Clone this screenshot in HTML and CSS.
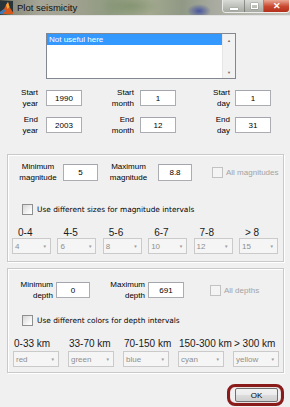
FILE: index.html
```html
<!DOCTYPE html>
<html lang="en">
<head>
    <meta charset="UTF-8">
    <meta name="viewport" content="width=device-width, initial-scale=1.0">
    <title>Plot seismicity</title>
    <link rel="stylesheet" href="styles.css">
</head>
<body>
    <div class="titlebar">
        <svg class="app-icon" width="13" height="13" viewBox="0 0 13 13">
            <rect width="13" height="13" fill="#27343a"/>
            <path d="M0 11 L4 8 L6 4 L8 1 L9.5 6 L13 11.5 L13 13 L0 13 Z" fill="#d8581a"/>
            <path d="M6 4 L8 1 L9.5 6 L7.5 8 Z" fill="#f3a739"/>
            <path d="M0 11 L4 8 L5.5 10 L2.5 13 L0 13 Z" fill="#3b7cc0"/>
        </svg>
        <span class="title">Plot seismicity</span>
        <div class="caption-buttons">
            <span class="cap-btn min"><span class="min-bar"></span></span>
            <span class="cap-btn max"><span class="max-box"></span></span>
            <span class="cap-btn close">✕</span>
        </div>
    </div>

    <div class="listbox">
        <div class="list-items">
            <div class="list-item selected">Not useful here</div>
        </div>
        <div class="list-scroll">
            <span class="scroll-arrow">▲</span>
            <span class="scroll-arrow">▼</span>
        </div>
    </div>

    <div class="dates">
        <div class="date-label">Start<br>year</div>
        <input class="edit" type="text" value="1990">
        <div class="date-label">Start<br>month</div>
        <input class="edit" type="text" value="1">
        <div class="date-label">Start<br>day</div>
        <input class="edit" type="text" value="1">

        <div class="date-label">End<br>year</div>
        <input class="edit" type="text" value="2003">
        <div class="date-label">End<br>month</div>
        <input class="edit" type="text" value="12">
        <div class="date-label">End<br>day</div>
        <input class="edit" type="text" value="31">
    </div>

    <!-- magnitude settings -->
    <div class="panel panel-mag">
        <div class="limits-row">
            <div class="limit-label mag-min">Minimum<br>magnitude</div>
            <input class="edit mag-min-edit" type="text" value="5">
            <div class="limit-label mag-max">Maximum<br>magnitude</div>
            <input class="edit mag-max-edit" type="text" value="8.8">
            <label class="check-item disabled">
                <span class="check"></span>
                <span>All magnitudes</span>
            </label>
        </div>
        <label class="check-item option-row">
            <span class="check enabled"></span>
            <span class="option-text">Use different sizes for magnitude intervals</span>
        </label>
        <div class="intervals mag-intervals">
            <div class="interval">
                <div class="interval-name">0-4</div>
                <div class="popup"><span>4</span><span class="popup-arrow">▼</span></div>
            </div>
            <div class="interval">
                <div class="interval-name">4-5</div>
                <div class="popup"><span>6</span><span class="popup-arrow">▼</span></div>
            </div>
            <div class="interval">
                <div class="interval-name">5-6</div>
                <div class="popup"><span>8</span><span class="popup-arrow">▼</span></div>
            </div>
            <div class="interval">
                <div class="interval-name">6-7</div>
                <div class="popup"><span>10</span><span class="popup-arrow">▼</span></div>
            </div>
            <div class="interval">
                <div class="interval-name">7-8</div>
                <div class="popup"><span>12</span><span class="popup-arrow">▼</span></div>
            </div>
            <div class="interval">
                <div class="interval-name">&gt; 8</div>
                <div class="popup"><span>15</span><span class="popup-arrow">▼</span></div>
            </div>
        </div>
    </div>

    <!-- depth settings -->
    <div class="panel panel-depth">
        <div class="limits-row depth-row">
            <div class="limit-label depth-min">Minimum<br>depth</div>
            <input class="edit depth-min-edit" type="text" value="0">
            <div class="limit-label depth-max">Maximum<br>depth</div>
            <input class="edit depth-max-edit" type="text" value="691">
            <label class="check-item disabled depth-all">
                <span class="check"></span>
                <span>All depths</span>
            </label>
        </div>
        <label class="check-item option-row depth-option">
            <span class="check enabled"></span>
            <span class="option-text">Use different colors for depth intervals</span>
        </label>
        <div class="intervals depth-intervals">
            <div class="interval">
                <div class="interval-name">0-33 km</div>
                <div class="popup"><span>red</span><span class="popup-arrow">▼</span></div>
            </div>
            <div class="interval">
                <div class="interval-name">33-70 km</div>
                <div class="popup"><span>green</span><span class="popup-arrow">▼</span></div>
            </div>
            <div class="interval">
                <div class="interval-name">70-150 km</div>
                <div class="popup"><span>blue</span><span class="popup-arrow">▼</span></div>
            </div>
            <div class="interval">
                <div class="interval-name">150-300 km</div>
                <div class="popup"><span>cyan</span><span class="popup-arrow">▼</span></div>
            </div>
            <div class="interval">
                <div class="interval-name">&gt; 300 km</div>
                <div class="popup"><span>yellow</span><span class="popup-arrow">▼</span></div>
            </div>
        </div>
    </div>

    <div class="actions">
        <div class="ok-ring">
            <button class="ok-button">OK</button>
        </div>
    </div>
</body>
</html>
```

FILE: styles.css
```css
* {
    box-sizing: border-box;
}
body {
    margin: 0;
    width: 290px;
    height: 407px;
    overflow: hidden;
    background-color: #f0f0f0;
    font-family: "Liberation Sans", Arial, sans-serif;
    font-size: 8px;
    color: #000;
}

/* window title bar */
.titlebar {
    height: 16px;
    display: flex;
    align-items: flex-start;
    border-bottom: 1px solid #e2e2e2;
    background:
        radial-gradient(ellipse 12px 7px at 199px 11px, rgba(68, 82, 160, 0.95), rgba(68, 82, 160, 0)),
        radial-gradient(ellipse 30px 10px at 130px 6px, rgba(120, 140, 100, 0.6), rgba(120, 140, 100, 0)),
        linear-gradient(to right, #3f4035 0, #8d8d7d 14px, #a6a698 40px, #a0a190 75px, #8f9b80 110px, #a3a98f 150px, #909985 182px, #a9aba1 215px, #c4c4bc 290px);
}
.app-icon {
    margin: 1px 0 0 0;
    flex: none;
}
.title {
    margin: 2px 0 0 4px;
    font-size: 9.5px;
    color: #111;
}
.caption-buttons {
    margin-left: auto;
    display: flex;
    height: 13px;
    border: 1px solid rgba(255, 255, 255, 0.75);
    border-top: none;
    border-radius: 0 0 4px 4px;
    overflow: hidden;
}
.cap-btn {
    height: 12px;
    display: flex;
    align-items: center;
    justify-content: center;
}
.cap-btn.min {
    width: 22px;
    background: linear-gradient(#d8dbd6, #a6aaa2);
    border-right: 1px solid rgba(80, 80, 80, 0.5);
}
.cap-btn.max {
    width: 19px;
    background: linear-gradient(#d8dbd6, #a6aaa2);
    border-right: 1px solid rgba(80, 80, 80, 0.5);
}
.cap-btn.close {
    width: 25px;
    background: linear-gradient(#e9a894, #c9462e 55%, #b3301b);
    color: #fff;
    font-size: 9px;
    font-weight: bold;
}
.min-bar {
    width: 8px;
    height: 2px;
    margin-top: 5px;
    background: #fff;
    box-shadow: 0 0 1px #444;
}
.max-box {
    width: 7px;
    height: 6px;
    border: 1px solid #fff;
    border-top-width: 2px;
    box-shadow: 0 0 1px #444;
}

/* list box */
.listbox {
    display: flex;
    width: 190px;
    height: 46px;
    margin: 17px 0 0 46px;
    border: 1px solid #828790;
    background: #fff;
}
.list-items {
    flex: 1;
}
.list-item {
    height: 11px;
    line-height: 11px;
    padding-left: 2px;
}
.list-item.selected {
    background: #3399ff;
    color: #fff;
}
.list-scroll {
    width: 13px;
    display: flex;
    flex-direction: column;
    justify-content: space-between;
    align-items: center;
    padding: 4px 0 3px;
    background: #f2f2f2;
    border-left: 1px solid #e6e6e6;
}
.scroll-arrow {
    font-size: 4px;
    color: #6d6d6d;
}

/* edit boxes */
.edit {
    height: 16px;
    padding: 0;
    margin: 0;
    border: 1px solid #abadb3;
    border-top-color: #a3a6ad;
    background: #fff;
    font-family: "Liberation Sans", Arial, sans-serif;
    font-size: 8px;
    color: #000;
    text-align: center;
    outline: none;
}

/* start / end date grid */
.dates {
    display: grid;
    grid-template-columns: 46px 36px 58px 36px 59px 36px;
    grid-auto-rows: 22px;
    row-gap: 5px;
    align-items: center;
    margin-top: 8px;
}
.date-label {
    line-height: 11px;
    text-align: right;
}
.dates .date-label:nth-child(6n+1) {
    padding-right: 8px;
}
.dates .date-label:nth-child(6n+3) {
    padding-right: 6px;
}
.dates .date-label:nth-child(6n+5) {
    padding-right: 5px;
}
.dates .edit {
    width: 36px;
}

/* group boxes */
.panel {
    width: 277px;
    margin-left: 7px;
    border: 1px solid #c9c9c9;
    box-shadow: inset 1px 1px 0 #fff, 1px 1px 0 #fff;
}
.panel-mag {
    height: 108px;
    margin-top: 18px;
}
.panel-depth {
    height: 105px;
    margin-top: 6px;
}
.limits-row {
    display: flex;
    align-items: center;
    height: 22px;
    margin-top: 6px;
    padding-left: 8px;
}
.depth-row {
    margin-top: 10px;
}
.limit-label {
    line-height: 11px;
}
.mag-min {
    width: 44px;
    text-align: center;
}
.mag-min-edit {
    width: 35px;
    height: 17px;
    margin-left: 3px;
}
.mag-max {
    width: 57px;
    text-align: center;
    padding-left: 4px;
}
.mag-max-edit {
    width: 34px;
    height: 17px;
    margin-left: 3px;
}
.depth-min {
    width: 37px;
    text-align: right;
}
.depth-min-edit {
    width: 34px;
    margin-left: 3px;
}
.depth-max {
    width: 55px;
    text-align: right;
}
.depth-max-edit {
    width: 36px;
    margin-left: 3px;
}

/* checkboxes */
.check-item {
    display: flex;
    align-items: center;
    gap: 3px;
}
.limits-row .check-item {
    margin-left: 20px;
}
.limits-row .depth-all {
    margin-left: 26px;
}
.check {
    width: 11px;
    height: 11px;
    flex: none;
    border: 1px solid #c2c2c2;
    background: #f4f4f4;
}
.check.enabled {
    border-color: #8e8f8f;
    background: linear-gradient(135deg, #d6d6d6, #f7f7f7 70%, #fff);
}
.check-item.disabled {
    color: #a3a3a3;
}
.option-row {
    height: 12px;
    margin: 20px 0 0 14px;
}
.depth-option {
    margin-top: 13px;
}
.option-text {
    font-family: "DejaVu Sans", Verdana, sans-serif;
    font-size: 7.4px;
    margin-left: 1px;
}

/* interval popups */
.intervals {
    display: grid;
    margin-top: 12px;
}
.mag-intervals {
    grid-template-columns: repeat(6, 39px);
    column-gap: 6.4px;
    padding-left: 4px;
}
.depth-intervals {
    grid-template-columns: repeat(5, 46px);
    column-gap: 9px;
    padding-left: 5px;
}
.interval-name {
    font-size: 10px;
    line-height: 11px;
    color: #1a1a1a;
    white-space: nowrap;
}
.mag-intervals .interval-name {
    padding-left: 6px;
}
.depth-intervals .interval-name {
    padding-left: 1px;
}
.depth-intervals .popup {
    margin-top: 2px;
}
.popup {
    height: 16px;
    display: flex;
    justify-content: space-between;
    align-items: center;
    padding: 0 3px 0 2px;
    border: 1px solid #cacaca;
    background: #f5f5f5;
    color: #8f8f8f;
    font-size: 8px;
}
.popup-arrow {
    font-size: 4.5px;
    color: #9c9c9c;
}

/* OK button */
.actions {
    display: flex;
    justify-content: flex-end;
    margin: 11px 6px 0 0;
}
.ok-ring {
    padding: 1px 3px 1px 5px;
    border: 3px solid #8a1b1b;
    border-radius: 8px;
    box-shadow: inset 0 0 1px #b84a4a;
}
.ok-button {
    width: 43px;
    height: 14px;
    padding: 0;
    border: 1px solid #707070;
    border-radius: 2px;
    background: linear-gradient(#f2f2f2, #ebebeb 50%, #dddddd 51%, #cfcfcf);
    font-family: "Liberation Sans", Arial, sans-serif;
    font-size: 8px;
    color: #000;
}
```
